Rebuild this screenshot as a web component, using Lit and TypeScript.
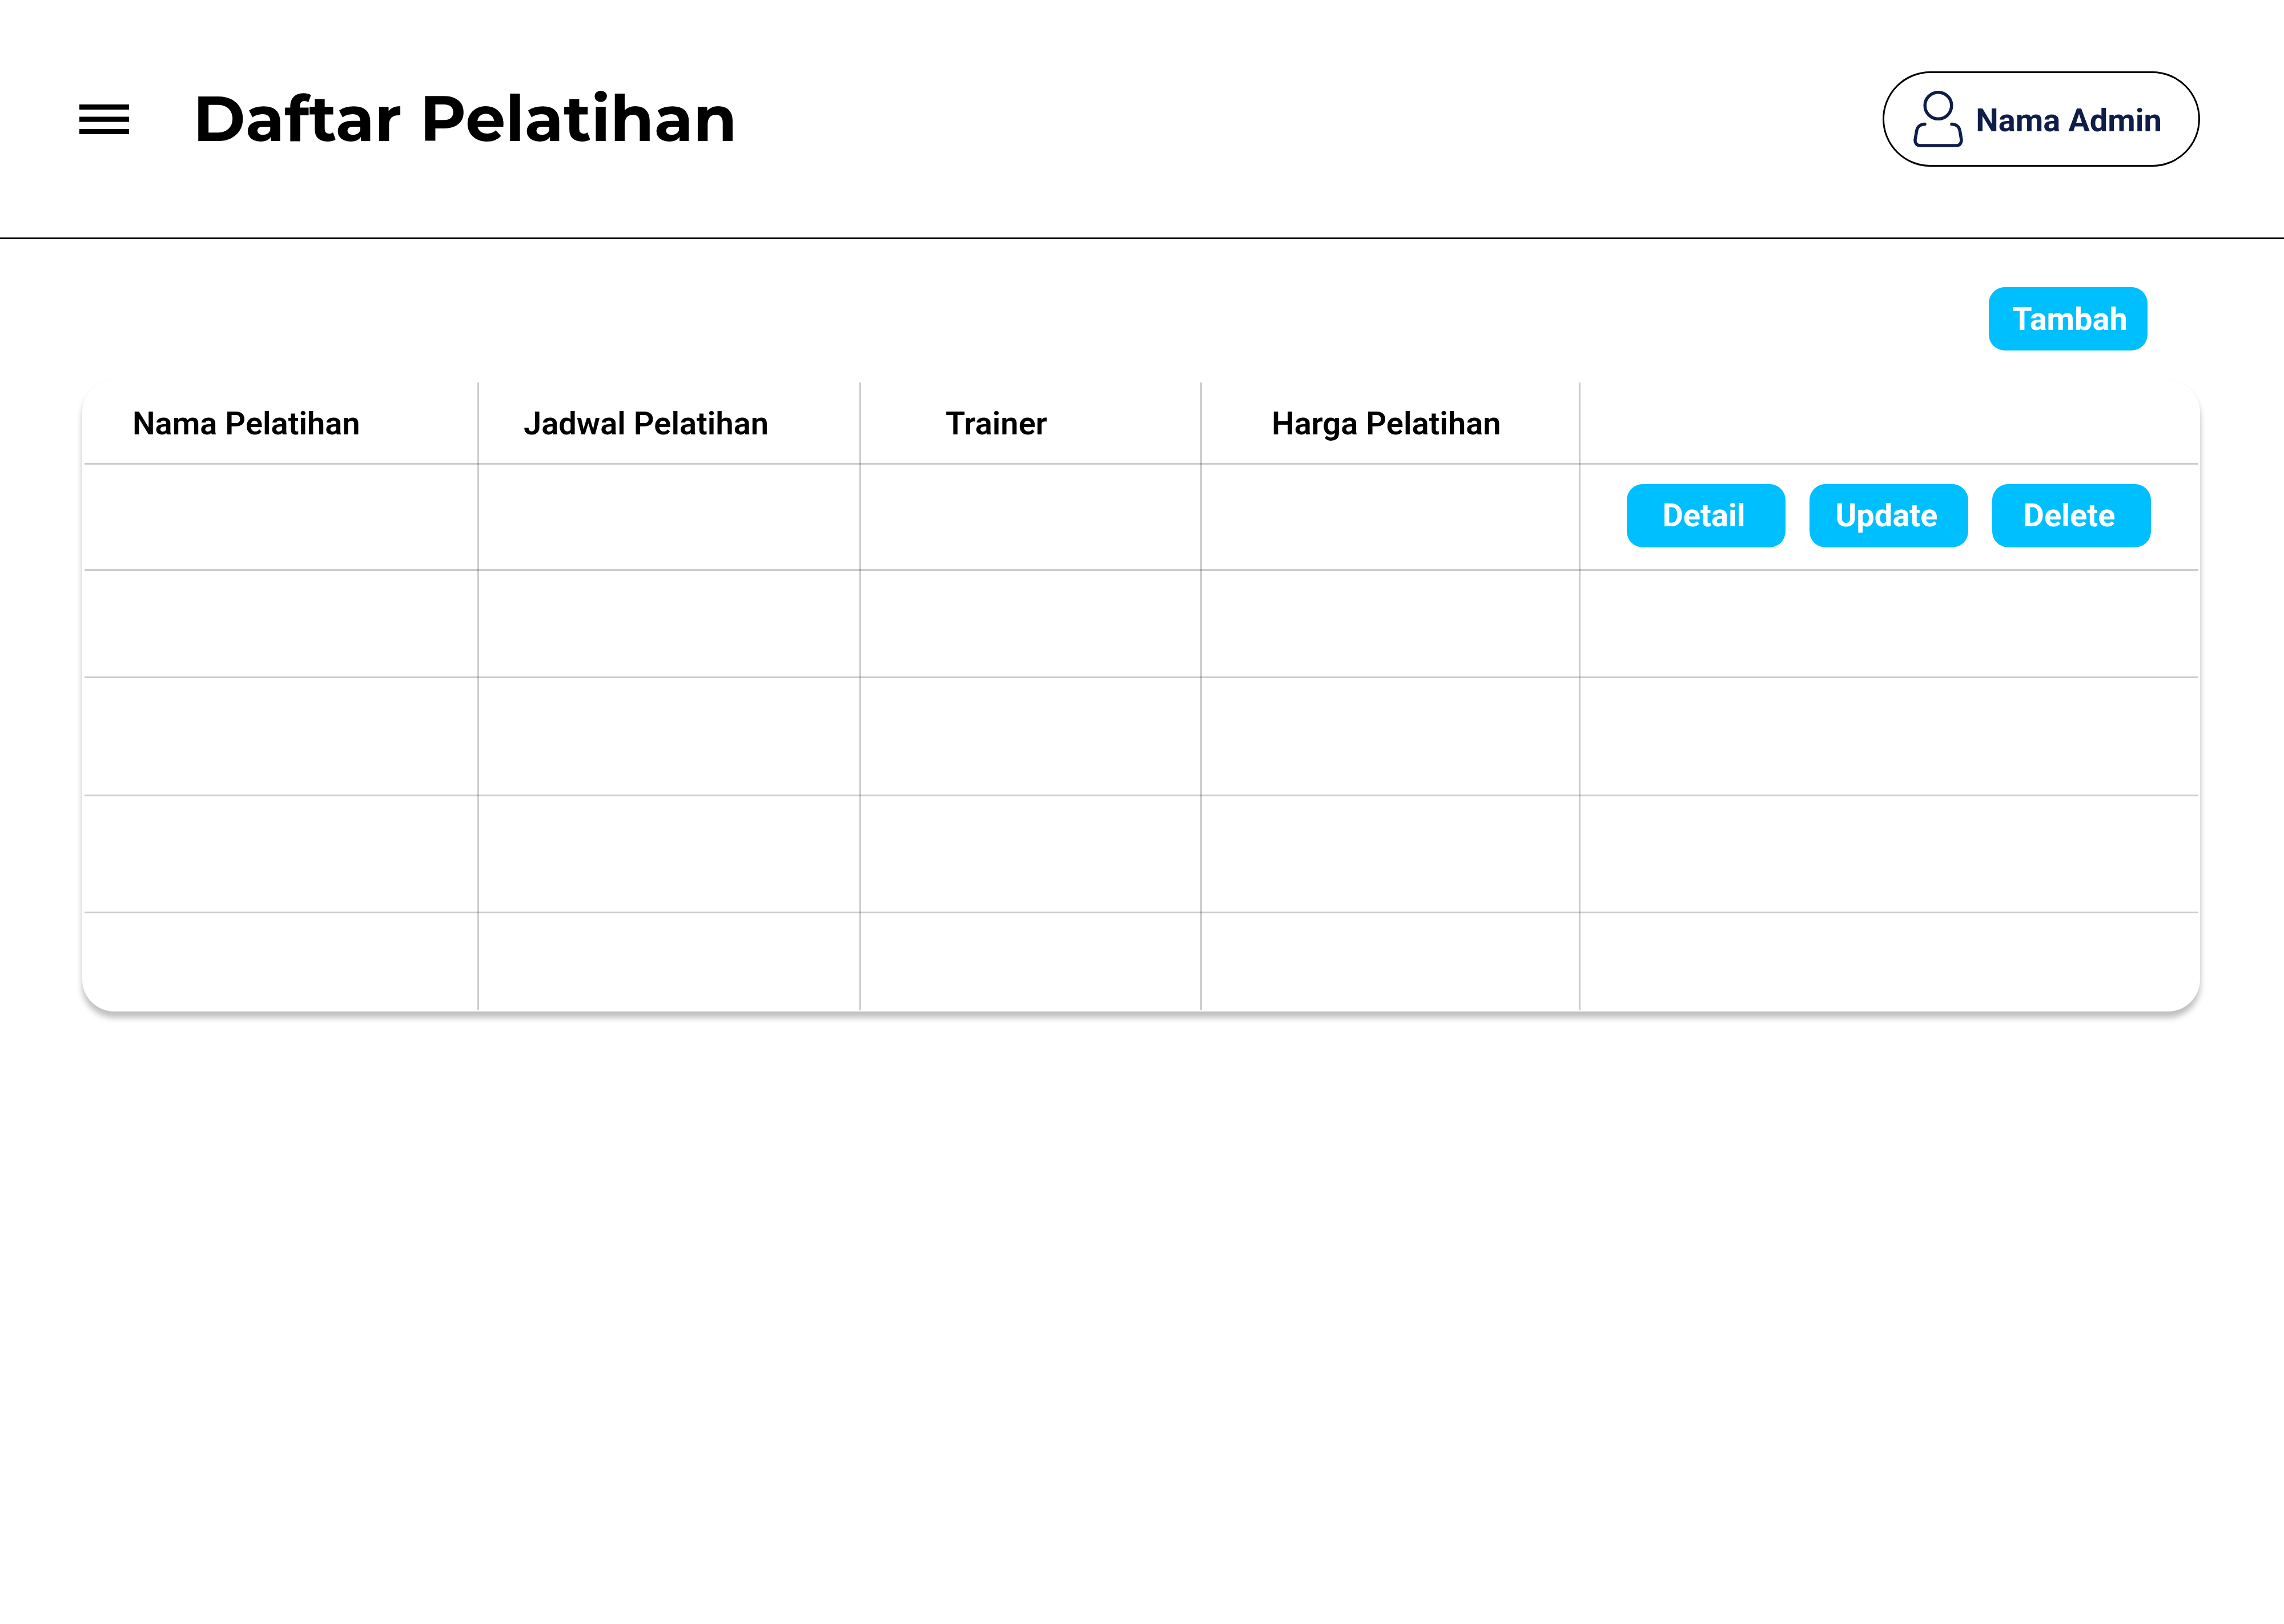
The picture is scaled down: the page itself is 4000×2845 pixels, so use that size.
import { LitElement, html, css, svg } from "lit";
import { customElement, state } from "lit/decorators.js";

interface Column {
  key: string;
  label: string;
}

const COLUMNS: Column[] = [
  { key: "name", label: "Nama Pelatihan" },
  { key: "schedule", label: "Jadwal Pelatihan" },
  { key: "trainer", label: "Trainer" },
  { key: "price", label: "Harga Pelatihan" },
];

const ACTIONS = ["Detail", "Update", "Delete"];

const menuIcon = svg`
  <svg class="menu-icon" viewBox="0 0 87 52" aria-hidden="true">
    <path d="M0 0H87V9H0ZM0 21.5H87V30.5H0ZM0 43H87V52H0Z" fill="currentColor" />
  </svg>`;

const userIcon = svg`
  <svg class="user-icon" viewBox="0 0 87 99" aria-hidden="true">
    <g fill="none" stroke="currentColor" stroke-width="5.5" stroke-linecap="round" stroke-linejoin="round">
      <circle cx="43.5" cy="26" r="23.3" />
      <path d="M20 58.5C12 58.5 6.5 63 5.5 71L3 86C2.600 91.500 6 96 11.500 96H75.500C81 96 84.400 91.500 84 86L81.500 71C80.500 63 75 58.500 67 58.500" />
    </g>
  </svg>`;

@customElement("app-root")
export class AppRoot extends LitElement {
  static styles = css`
    :host {
      display: block;
      min-height: 100vh;
      background: #fff;
      color: #000;
      font-family: Roboto, "Liberation Sans", sans-serif;
      font-size: 56px;
      line-height: 64px;
    }
    * {
      box-sizing: border-box;
    }
    button {
      margin: 0;
      padding: 0;
      border: 0;
      background: none;
      color: inherit;
      font: inherit;
      cursor: pointer;
    }
    .header {
      display: flex;
      align-items: center;
      padding: 125px 147px 124px 139px;
      border-bottom: 3px solid #000;
    }
    .menu {
      display: flex;
    }
    .menu-icon {
      width: 87px;
      height: 52px;
    }
    .title {
      flex: 1;
      margin: 0 0 0 112px;
      padding-bottom: 2px;
      font-family: Montserrat, Inter, sans-serif;
      font-size: 111px;
      line-height: 136px;
      font-weight: 700;
    }
    .account {
      display: flex;
      align-items: center;
      gap: 22px;
      height: 167px;
      padding: 0 64px 0 51px;
      border: 3px solid #000;
      border-radius: 84px;
      color: #0f1d49;
      font-weight: 700;
    }
    .account-name {
      padding-top: 4px;
    }
    .user-icon {
      width: 87px;
      height: 99px;
    }
    .content {
      padding: 84px 147px 84px 144px;
    }
    .toolbar {
      display: flex;
      justify-content: flex-end;
      padding: 0 92px 52px 0;
    }
    .button {
      width: 278px;
      height: 111px;
      border-radius: 28px;
      background: #00bfff;
      color: #fff;
      font-weight: 700;
    }
    .toolbar .button {
      padding-left: 6px;
    }
    .actions .button {
      padding-right: 8px;
    }
    .card {
      padding: 4px 3px 3px 4px;
      border-radius: 56px;
      background: #fff;
      box-shadow: 0 11px 11px rgba(0, 0, 0, 0.25), 0 0 0 1px rgba(0, 0, 0, 0.02);
    }
    .table {
      width: 100%;
      table-layout: fixed;
      border-spacing: 0;
    }
    .cell {
      padding: 0;
      --line: linear-gradient(rgba(0, 0, 0, 0.2), rgba(0, 0, 0, 0.2));
      background-image: var(--line), var(--line);
      background-repeat: no-repeat;
      background-position: right top, left bottom;
      background-size: 3px 100%, 100% 3px;
    }
    .cell:last-child {
      background-size: 0 0, 100% 3px;
    }
    .row:last-child .cell {
      background-size: 3px 100%, 0 0;
    }
    .row:last-child .cell:last-child {
      background-size: 0 0, 0 0;
    }
    .head {
      height: 144px;
      text-align: left;
      font-weight: 600;
    }
    .col-name { width: 691px; }
    .col-schedule { width: 669px; }
    .col-trainer { width: 597px; }
    .col-price { width: 663px; }
    .head-name { padding-left: 84px; }
    .head-schedule { padding-left: 78px; }
    .head-trainer { padding-left: 148px; }
    .head-price { padding-left: 122px; }
    .row-1 { height: 186px; }
    .row-2 { height: 188px; }
    .row-3 { height: 207px; }
    .row-4 { height: 205px; }
    .row-5 { height: 169px; }
    .actions {
      display: flex;
      justify-content: flex-end;
      gap: 42px;
      padding: 0 83px 8px 0;
    }
  `;

  @state() private rows = [1, 2, 3, 4, 5];

  render() {
    return html`
      <header class="header">
        <button class="menu" aria-label="Menu">${menuIcon}</button>
        <h1 class="title">Daftar Pelatihan</h1>
        <button class="account">${userIcon}<span class="account-name">Nama Admin</span></button>
      </header>
      <main class="content">
        <div class="toolbar">
          <button class="button">Tambah</button>
        </div>
        <div class="card">
          <table class="table">
            <colgroup>
              ${COLUMNS.map((c) => html`<col class="col-${c.key}" />`)}
              <col />
            </colgroup>
            <thead>
              <tr>
                ${COLUMNS.map(
                  (c) => html`<th class="cell head head-${c.key}" scope="col">${c.label}</th>`
                )}
                <td class="cell head"></td>
              </tr>
            </thead>
            <tbody>
              ${this.rows.map(
                (n, i) => html`
                  <tr class="row row-${n}">
                    ${COLUMNS.map(() => html`<td class="cell"></td>`)}
                    <td class="cell">
                      ${i === 0
                        ? html`<div class="actions">
                            ${ACTIONS.map((a) => html`<button class="button">${a}</button>`)}
                          </div>`
                        : null}
                    </td>
                  </tr>
                `
              )}
            </tbody>
          </table>
        </div>
      </main>
    `;
  }
}
